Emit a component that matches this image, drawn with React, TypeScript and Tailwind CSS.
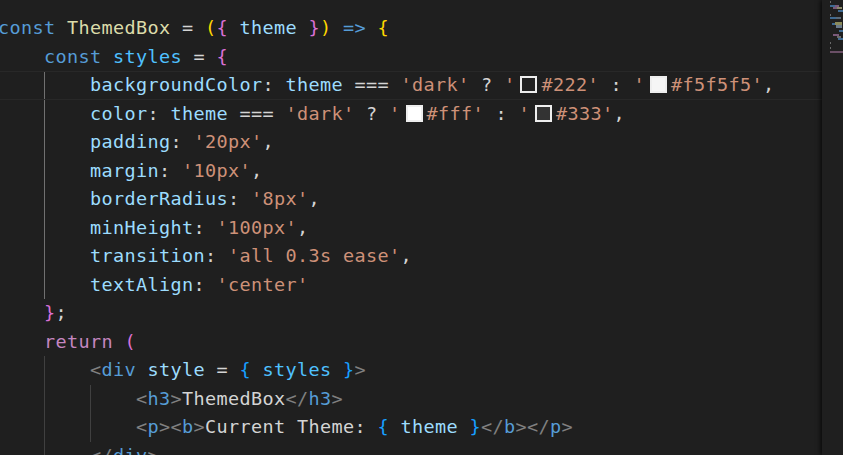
import React from 'react';

type Tok = { t: string; c: string } | { sw: string };

const K = '#569cd6';
const F = '#dcdcaa';
const V = '#9cdcfe';
const C = '#4fc1ff';
const S = '#ce9178';
const P = '#d4d4d4';
const G = '#ffd700';
const O = '#da70d6';
const B = '#179fff';
const R = '#c586c0';
const A = '#808080';

const t = (text: string, c: string = P): Tok => ({ t: text, c });
const sw = (color: string): Tok => ({ sw: color });

const prop = (name: string, value: string, last = false): Tok[] => {
  const toks = [t(name, V), t(': '), t(value, S)];
  if (!last) toks.push(t(','));
  return toks;
};

const lines: { indent: number; toks: Tok[] }[] = [
  {
    indent: 0,
    toks: [t('const', K), t(' '), t('ThemedBox', F), t(' = '), t('(', G), t('{', O), t(' '), t('theme', V), t(' '), t('}', O), t(')', G), t(' '), t('=>', K), t(' '), t('{', G)],
  },
  { indent: 1, toks: [t('const', K), t(' '), t('styles', C), t(' = '), t('{', O)] },
  {
    indent: 2,
    toks: [t('backgroundColor', V), t(': '), t('theme', V), t(' === '), t("'dark'", S), t(' ? '), t("'", S), sw('#222'), t("#222'", S), t(' : '), t("'", S), sw('#f5f5f5'), t("#f5f5f5'", S), t(',')],
  },
  {
    indent: 2,
    toks: [t('color', V), t(': '), t('theme', V), t(' === '), t("'dark'", S), t(' ? '), t("'", S), sw('#fff'), t("#fff'", S), t(' : '), t("'", S), sw('#333'), t("#333'", S), t(',')],
  },
  { indent: 2, toks: prop('padding', "'20px'") },
  { indent: 2, toks: prop('margin', "'10px'") },
  { indent: 2, toks: prop('borderRadius', "'8px'") },
  { indent: 2, toks: prop('minHeight', "'100px'") },
  { indent: 2, toks: prop('transition', "'all 0.3s ease'") },
  { indent: 2, toks: prop('textAlign', "'center'", true) },
  { indent: 1, toks: [t('}', O), t(';')] },
  { indent: 1, toks: [t('return', R), t(' '), t('(', O)] },
  {
    indent: 2,
    toks: [t('<', A), t('div', K), t(' '), t('style', V), t(' = '), t('{', B), t(' '), t('styles', C), t(' '), t('}', B), t('>', A)],
  },
  { indent: 3, toks: [t('<', A), t('h3', K), t('>', A), t('ThemedBox'), t('</', A), t('h3', K), t('>', A)] },
  {
    indent: 3,
    toks: [t('<', A), t('p', K), t('>', A), t('<', A), t('b', K), t('>', A), t('Current Theme: '), t('{', B), t(' '), t('theme', V), t(' '), t('}', B), t('</', A), t('b', K), t('>', A), t('</', A), t('p', K), t('>', A)],
  },
  { indent: 2, toks: [t('</', A), t('div', K), t('>', A)] },
];

// minimap blocks: [x, y, w, h, color]
const mini: [number, number, number, number, string][] = [
  [8, 1, 1, 2, '#6a6a6a'],
  [8, 5, 5, 2, '#3f6a92'],
  [13, 5, 4, 2, '#7a5a7a'],
  [11, 7, 4, 2, '#7a5a7a'],
  [15, 7, 5, 2, '#8a8a6a'],
  [16, 10, 5, 2, '#3f6a92'],
  [8, 14, 1, 2, '#6a6a6a'],
  [8, 17, 6, 2, '#3f6a92'],
  [14, 17, 5, 2, '#5a6a7a'],
  [10, 23, 3, 2, '#3f6a92'],
  [13, 22, 7, 3, '#8a8a5a'],
  [14, 25, 6, 3, '#6a7a8a'],
  [17, 30, 4, 2, '#3f6a92'],
  [11, 34, 6, 2, '#7a5a7a'],
  [15, 36, 4, 2, '#6a6a6a'],
  [16, 38, 5, 2, '#3f6a92'],
  [8, 42, 1, 2, '#6a6a6a'],
  [8, 47, 1, 2, '#6a6a6a'],
  [8, 51, 13, 2, '#6a4f66'],
];

const Swatch = ({ color }: { color: string }) => (
  <span
    className="inline-block w-[17px] h-[17px] ml-[5px] mr-[4px] border-2 border-[#eeeeee] align-[-2px]"
    style={{ backgroundColor: color }}
  />
);

export default function App() {
  return (
    <div className="w-[843px] h-[455px] overflow-hidden bg-[#1f1f1f] flex font-['DejaVu_Sans_Mono',monospace] text-[18.5px] tracking-[0.36px]">
      <div className="w-[822px] shrink-0 pt-[14px] overflow-hidden">
        {lines.map((line, i) => (
          <div
            key={i}
            className={
              'flex h-[28.5px] leading-[28.5px] whitespace-pre ' +
              (i === 2 ? 'border-y border-[#282828]' : '')
            }
          >
            <div className="flex ml-[-2px] shrink-0">
              {Array.from({ length: line.indent }).map((_, k) => (
                <span
                  key={k}
                  className={
                    'w-[46px] shrink-0 ' +
                    (k === 0
                      ? ''
                      : i >= 2 && i <= 9 && k === 1
                      ? 'border-l border-[#707070]'
                      : 'border-l border-[#404040]')
                  }
                />
              ))}
            </div>
            <span className={i === 2 ? 'leading-[26.5px]' : ''}>
              {line.toks.map((tok, j) =>
                'sw' in tok ? (
                  <Swatch key={j} color={tok.sw} />
                ) : (
                  <span key={j} style={{ color: tok.c }}>
                    {tok.t}
                  </span>
                )
              )}
            </span>
          </div>
        ))}
      </div>
      <div className="w-[21px] shrink-0 h-full bg-[#1f1f1f] shadow-[-2px_0_4px_rgba(0,0,0,0.6)]">
        <svg width="21" height="455" viewBox="0 0 21 455">
          {mini.map(([x, y, w, h, c], i) => (
            <rect key={i} x={x} y={y} width={w} height={h} fill={c} />
          ))}
        </svg>
      </div>
    </div>
  );
}
